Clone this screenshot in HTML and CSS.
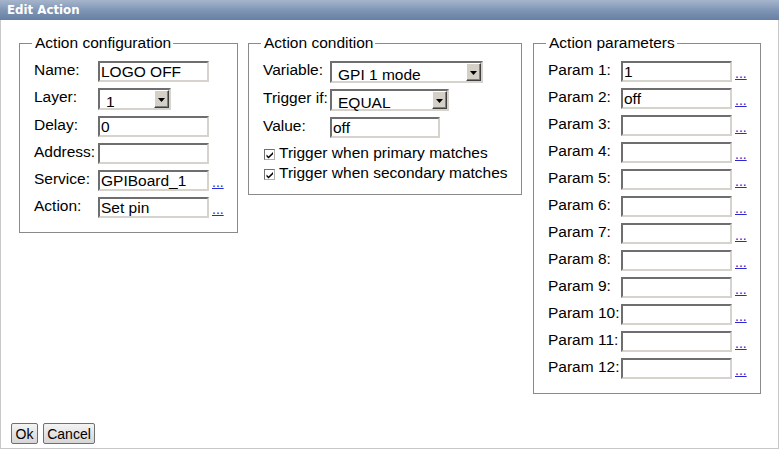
FILE: index.html
```html
<!DOCTYPE html>
<html>
<head>
<meta charset="utf-8">
<link rel="stylesheet" href="styles.css">
</head>
<body>
<div class="window">
  <div class="titlebar">Edit Action</div>
  <div class="panels">
    <fieldset class="fs fs-config">
      <legend>Action configuration</legend>
      <div class="form form-config">
        <label>Name:</label><input class="txt" type="text" value="LOGO OFF"><span></span>
        <label>Layer:</label><div class="select sel-layer"><span class="sel-val">1</span><span class="sel-btn"><svg width="7" height="4" viewBox="0 0 7 4"><path d="M0 0h7L3.5 4z" fill="#000"/></svg></span></div><span></span>
        <label>Delay:</label><input class="txt" type="text" value="0"><span></span>
        <label>Address:</label><input class="txt" type="text" value=""><span></span>
        <label>Service:</label><input class="txt" type="text" value="GPIBoard_1"><a class="dots" href="#">...</a>
        <label>Action:</label><input class="txt" type="text" value="Set pin"><a class="dots" href="#">...</a>
      </div>
    </fieldset>

    <fieldset class="fs fs-cond">
      <legend>Action condition</legend>
      <div class="form form-cond">
        <label>Variable:</label><div class="select sel-var"><span class="sel-val">GPI 1 mode</span><span class="sel-btn"><svg width="7" height="4" viewBox="0 0 7 4"><path d="M0 0h7L3.5 4z" fill="#000"/></svg></span></div>
        <label>Trigger if:</label><div class="select sel-trig"><span class="sel-val">EQUAL</span><span class="sel-btn"><svg width="7" height="4" viewBox="0 0 7 4"><path d="M0 0h7L3.5 4z" fill="#000"/></svg></span></div>
        <label>Value:</label><input class="txt txt-value" type="text" value="off">
      </div>
      <div class="checks">
        <div class="check"><span class="box"><svg width="8" height="8" viewBox="0 0 8 8"><path d="M0.5 3.5l2 2L7 1v2.2L2.5 7.5 0.5 5.5z" fill="#000"/></svg></span>Trigger when primary matches</div>
        <div class="check"><span class="box"><svg width="8" height="8" viewBox="0 0 8 8"><path d="M0.5 3.5l2 2L7 1v2.2L2.5 7.5 0.5 5.5z" fill="#000"/></svg></span>Trigger when secondary matches</div>
      </div>
    </fieldset>

    <fieldset class="fs fs-params">
      <legend>Action parameters</legend>
      <div class="form form-params">
        <label>Param 1:</label><input class="txt" type="text" value="1"><a class="dots" href="#">...</a>
        <label>Param 2:</label><input class="txt" type="text" value="off"><a class="dots" href="#">...</a>
        <label>Param 3:</label><input class="txt" type="text" value=""><a class="dots" href="#">...</a>
        <label>Param 4:</label><input class="txt" type="text" value=""><a class="dots" href="#">...</a>
        <label>Param 5:</label><input class="txt" type="text" value=""><a class="dots" href="#">...</a>
        <label>Param 6:</label><input class="txt" type="text" value=""><a class="dots" href="#">...</a>
        <label>Param 7:</label><input class="txt" type="text" value=""><a class="dots" href="#">...</a>
        <label>Param 8:</label><input class="txt" type="text" value=""><a class="dots" href="#">...</a>
        <label>Param 9:</label><input class="txt" type="text" value=""><a class="dots" href="#">...</a>
        <label>Param 10:</label><input class="txt" type="text" value=""><a class="dots" href="#">...</a>
        <label>Param 11:</label><input class="txt" type="text" value=""><a class="dots" href="#">...</a>
        <label>Param 12:</label><input class="txt" type="text" value=""><a class="dots" href="#">...</a>
      </div>
    </fieldset>
  </div>
  <div class="footer">
    <button class="btn btn-ok">Ok</button>
    <button class="btn btn-cancel">Cancel</button>
  </div>
</div>
</body>
</html>
```
FILE: styles.css
```css
html, body {
  margin: 0;
  padding: 0;
  background: #fff;
}
body {
  font-family: "Liberation Sans", Arial, sans-serif;
  font-size: 15.5px;
  color: #000;
}
.window {
  width: 779px;
  height: 449px;
  box-sizing: border-box;
  border: 1px solid #c8c8c8;
  border-top: none;
  display: flex;
  flex-direction: column;
  background: #fff;
}
.titlebar {
  height: 20px;
  margin: 0 -1px;
  padding-left: 7px;
  background: linear-gradient(#a6b5cc, #8096b6 50%, #677fa3);
  color: #fff;
  font-family: "DejaVu Sans", Verdana, sans-serif;
  font-weight: bold;
  font-size: 11.8px;
  line-height: 21px;
}
.panels {
  display: flex;
  align-items: flex-start;
  margin-top: 14px;
  padding-left: 18px;
}
.fs {
  margin: 0;
  box-sizing: border-box;
  border: 1px solid #8a8a8a;
  padding: 9px 0 14px 13px;
  min-width: 0;
}
.fs legend {
  padding: 0 2px 0 3px;
  margin-left: -1px;
  line-height: 18px;
  font-size: 15.5px;
}
.fs-config { width: 219px; }
.fs-cond { width: 274px; margin-left: 10px; padding-bottom: 11px; }
.fs-params { width: 228px; margin-left: 11px; }

.form {
  display: grid;
  row-gap: 6px;
  align-items: start;
}
.form-config { grid-template-columns: 65px 111px 18px; }
.form-cond { grid-template-columns: 68px auto; justify-items: start; row-gap: 6px; }
.form-params { grid-template-columns: 74px 111px 18px; }

.form label {
  line-height: 15px;
  padding-top: 1px;
  padding-left: 1px;
  white-space: nowrap;
}
.txt {
  box-sizing: border-box;
  width: 111px;
  height: 21px;
  margin: 0;
  padding: 0 2px 0 1px;
  border: 2px solid;
  border-color: #6e6e6e #d6d3cc #d6d3cc #6e6e6e;
  font-family: "Liberation Sans", Arial, sans-serif;
  font-size: 15.5px;
  color: #000;
  background: #fff;
  outline: none;
}
.txt-value { width: 110px; }
.dots {
  align-self: end;
  margin: 0 0 3px 3px;
  font-size: 14px;
  line-height: 12px;
  color: #2a2ad0;
  text-decoration: underline;
}
.select {
  box-sizing: border-box;
  height: 22px;
  display: flex;
  border: 2px solid;
  border-color: #6e6e6e #d6d3cc #d6d3cc #6e6e6e;
  background: #fff;
}
.sel-layer { width: 73px; }
.sel-var { width: 153px; }
.sel-trig { width: 119px; }
.sel-val {
  flex: 1;
  padding-left: 6px;
  line-height: 20px;
  padding-top: 2px;
  white-space: nowrap;
  overflow: hidden;
  height: 18px;
}
.sel-btn {
  box-sizing: border-box;
  width: 15px;
  height: 18px;
  background: #d4d0c8;
  border: 1px solid;
  border-color: #fff #404040 #404040 #fff;
  box-shadow: inset -1px -1px 0 #808080;
  display: flex;
  align-items: center;
  justify-content: center;
}
.sel-btn svg { display: block; margin-top: 1px; }

.checks {
  margin-top: 5px;
}
.check {
  display: flex;
  align-items: center;
  height: 20px;
  line-height: 20px;
  white-space: nowrap;
}
.box {
  box-sizing: border-box;
  width: 11px;
  height: 11px;
  margin: 3px 4px 0 2px;
  border: 1px solid;
  border-color: #707070 #b0b0b0 #b0b0b0 #707070;
  background: #fff;
  display: flex;
  align-items: center;
  justify-content: center;
}
.box svg { display: block; }

.footer {
  margin-top: auto;
  padding: 0 0 4px 10px;
  display: flex;
  gap: 5px;
}
.btn {
  box-sizing: border-box;
  height: 21px;
  margin: 0;
  padding: 0;
  border: 1px solid #707070;
  border-radius: 2px;
  background: linear-gradient(#f4f4f4, #e4e4e4 50%, #d6d6d6);
  font-family: "Liberation Sans", Arial, sans-serif;
  font-size: 14px;
  color: #000;
}
.btn-ok { width: 27px; }
.btn-cancel { width: 52px; }
```
